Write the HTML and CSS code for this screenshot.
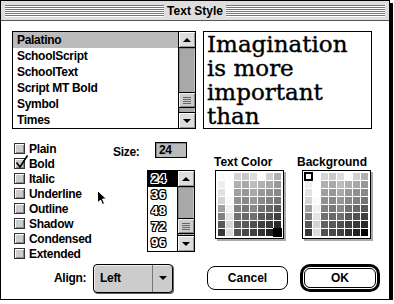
FILE: index.html
```html
<!DOCTYPE html>
<html lang="en">
<head>
    <meta charset="UTF-8">
    <title>Text Style</title>
    <link rel="stylesheet" href="styles.css">
</head>
<body>
    <div class="window">
        <div class="titlebar">
            <span class="stripes"></span>
            <span class="title">Text Style</span>
            <span class="stripes"></span>
        </div>

        <div class="content">
            <div class="top">
                <div class="listbox fonts">
                    <ul class="items">
                        <li class="sel">Palatino</li>
                        <li>SchoolScript</li>
                        <li>SchoolText</li>
                        <li>Script MT Bold</li>
                        <li>Symbol</li>
                        <li>Times</li>
                    </ul>
                    <div class="scrollbar">
                        <div class="arrow up"></div>
                        <div class="track"><div class="thumb"></div></div>
                        <div class="arrow down"></div>
                    </div>
                </div>
                <div class="preview">
                    <p class="quote">Imagination<br>is more<br>important<br>than</p>
                </div>
            </div>

            <div class="middle">
                <ul class="styles">
                    <li><span class="check"></span>Plain</li>
                    <li><span class="check checked">
                        <svg class="tick" width="16" height="16" viewBox="0 0 16 16"><path d="M2.5 8.5 L6 13 L13.5 1.5" fill="none" stroke="#000" stroke-width="1.6"/></svg>
                    </span>Bold</li>
                    <li><span class="check"></span>Italic</li>
                    <li><span class="check"></span>Underline</li>
                    <li><span class="check"></span>Outline</li>
                    <li><span class="check"></span>Shadow</li>
                    <li><span class="check"></span>Condensed</li>
                    <li><span class="check"></span>Extended</li>
                </ul>

                <div class="size">
                    <div class="size-row">
                        <label>Size:</label>
                        <div class="field">24</div>
                    </div>
                    <div class="listbox sizes">
                        <ul class="items">
                            <li class="sel">24</li>
                            <li>36</li>
                            <li>48</li>
                            <li>72</li>
                            <li>96</li>
                        </ul>
                        <div class="scrollbar">
                            <div class="arrow up"></div>
                            <div class="track"><div class="thumb"></div></div>
                            <div class="arrow down"></div>
                        </div>
                    </div>
                </div>

                <div class="palette text-color">
                    <div class="label">Text Color</div>
                    <div class="grid" id="text-grid"></div>
                </div>
                <div class="palette background">
                    <div class="label">Background</div>
                    <div class="grid" id="back-grid"></div>
                </div>
            </div>

            <div class="bottom">
                <label class="align-label">Align:</label>
                <div class="popup">
                    <span class="popup-value">Left</span>
                    <span class="popup-arrow"></span>
                </div>
                <button class="btn cancel">Cancel</button>
                <div class="default-ring"><button class="btn ok">OK</button></div>
            </div>
        </div>

        <svg class="cursor" width="12" height="17" viewBox="0 0 12 17">
            <path d="M1.5 1.5 L1.5 14 L4.5 11 L6.5 15.5 L8.5 14.5 L6.5 10 L10.5 10 Z" fill="#000" stroke="#fff" stroke-width="1"/>
        </svg>
    </div>

    <script>
        // greys of the colour palette as it shows in the screenshot
        const shades = [
            ['#fafafa', '#fff', '#d4d4d4', '#c8c8c8', '#dcdcdc', '#fcfcfc', '#d0d0d0', '#b0b0b0'],
            ['#eeeeee', '#fff', '#b0b0b0', '#a8a8a8', '#bcbcbc', '#b0b0b0', '#a8a8a8', '#989898'],
            ['#e2e2e2', '#fff', '#a0a0a0', '#989898', '#a8a8a8', '#989898', '#909090', '#888888'],
            ['#d4d4d4', '#fafafa', '#909090', '#888888', '#989898', '#888888', '#808080', '#747474'],
            ['#a0a0a0', '#f0f0f0', '#808080', '#787878', '#888888', '#707070', '#686868', '#585858'],
            ['#808080', '#e4e4e4', '#707070', '#686868', '#707070', '#585858', '#505050', '#404040'],
            ['#585858', '#d4d4d4', '#606060', '#585858', '#505050', '#404040', '#383838', '#282828'],
            ['#383838', '#dcdcdc', '#505050', '#484848', '#404040', '#303030', '#202020', '#000000']
        ];

        function fillGrid(id, selRow, selCol, selClass) {
            const grid = document.getElementById(id);
            shades.forEach((row, r) => {
                row.forEach((shade, c) => {
                    const cell = document.createElement('span');
                    cell.className = 'cell';
                    cell.style.background = shade;
                    if (r === selRow && c === selCol) {
                        cell.classList.add(selClass);
                    }
                    grid.appendChild(cell);
                });
            });
        }

        fillGrid('text-grid', 7, 7, 'sel-dark');
        fillGrid('back-grid', 0, 0, 'sel-light');
    </script>
</body>
</html>
```

FILE: styles.css
```css
* {
    box-sizing: border-box;
}
body {
    margin: 0;
    background: #fff;
    color: #000;
    font-family: "Liberation Sans", Arial, sans-serif;
    font-weight: bold;
    font-size: 12px;
    letter-spacing: -0.3px;
}
ul {
    list-style: none;
    margin: 0;
    padding: 0;
}
.window {
    position: relative;
    width: 390px;
    height: 300px;
    border: 1px solid #000;
    box-shadow: 3px 3px 0 #000;
    background: #fff;
}
.titlebar {
    display: flex;
    align-items: center;
    height: 20px;
    padding: 0 4px;
    background: #dedede;
    border-bottom: 1px solid #555;
}
.stripes {
    flex: 1;
    height: 12px;
    background: repeating-linear-gradient(#777 0 1px, #fff 1px 2px);
}
.title {
    padding: 0 3px;
    line-height: 12px;
    letter-spacing: 0;
}
.content {
    padding: 10px 0 0 11px;
}
.top {
    display: flex;
    gap: 7px;
    height: 98px;
}
.listbox {
    display: flex;
    border: 1px solid #000;
    background: #fff;
}
.items {
    flex: 1;
}
.fonts {
    width: 184px;
    height: 98px;
}
.fonts li {
    height: 16px;
    line-height: 16px;
    padding-left: 4px;
}
.fonts li.sel {
    background: #bbb;
}
.scrollbar {
    width: 17px;
    display: flex;
    flex-direction: column;
    border-left: 1px solid #000;
    background: #a8a8a8;
}
.arrow {
    height: 16px;
    display: flex;
    align-items: center;
    justify-content: center;
    background: #ddd;
    box-shadow: inset 1px 1px #fff, inset -1px -1px #999;
}
.arrow::after {
    content: "";
    border-left: 4px solid transparent;
    border-right: 4px solid transparent;
}
.arrow.up {
    border-bottom: 1px solid #000;
}
.arrow.up::after {
    border-bottom: 4px solid #000;
}
.arrow.down {
    border-top: 1px solid #000;
}
.arrow.down::after {
    border-top: 4px solid #000;
}
.track {
    flex: 1;
    box-shadow: inset 1px 1px #888, inset -1px 0 #c4c4c4;
}
.thumb {
    height: 16px;
    display: flex;
    align-items: center;
    justify-content: center;
    background: #ccc;
    border-top: 1px solid #000;
    border-bottom: 1px solid #000;
    box-shadow: inset 1px 1px #eee, inset -1px -1px #888;
}
.thumb::before {
    content: "";
    width: 8px;
    height: 7px;
    background: repeating-linear-gradient(#666 0 1px, transparent 1px 2px);
}
.fonts .thumb {
    margin-top: 44px;
}
.sizes .thumb {
    margin-top: 31px;
}
.preview {
    width: 169px;
    height: 98px;
    overflow: hidden;
    padding: 0 0 0 3px;
    border: 1px solid #000;
}
.quote {
    margin: 0;
    font-family: "DejaVu Serif", "Liberation Serif", serif;
    font-weight: normal;
    font-size: 23px;
    line-height: 24px;
    letter-spacing: 0;
    -webkit-text-stroke: 0.4px #000;
}
.middle {
    display: flex;
    align-items: flex-start;
    margin-top: 12px;
    height: 120px;
}
.styles {
    width: 99px;
    margin-left: 2px;
}
.styles li {
    display: flex;
    align-items: center;
    gap: 4px;
    height: 15px;
}
.check {
    position: relative;
    width: 11px;
    height: 11px;
    border: 1px solid #333;
    background: #ccc;
    box-shadow: inset 1px 1px #fff, inset -1px -1px #888;
}
.tick {
    position: absolute;
    left: -1px;
    top: -5px;
}
.size {
    width: 82px;
    display: flex;
    flex-direction: column;
}
.size-row {
    display: flex;
    align-items: center;
    height: 16px;
    margin-top: 1px;
}
.size-row label {
    width: 42px;
    padding-top: 4px;
}
.field {
    width: 32px;
    height: 16px;
    padding-left: 3px;
    line-height: 14px;
    background: #bbb;
    border: 1px solid #000;
    box-shadow: inset 1px 1px #888;
}
.sizes {
    align-self: flex-end;
    width: 48px;
    height: 82px;
    margin-top: 12px;
}
.sizes li {
    height: 16px;
    line-height: 16px;
    padding-left: 3px;
    font-size: 13px;
    letter-spacing: 0.5px;
    color: #fff;
    text-shadow: 1px 0 #000, -1px 0 #000, 0 1px #000, 0 -1px #000,
                 1px 1px #000, -1px -1px #000, 1px -1px #000, -1px 1px #000;
}
.sizes li.sel {
    background: #000;
    color: #000;
    text-shadow: 1px 0 #fff, -1px 0 #fff, 0 1px #fff, 0 -1px #fff,
                 1px 1px #fff, -1px -1px #fff, 1px -1px #fff, -1px 1px #fff;
}
.palette {
    margin-top: 15px;
}
.palette .label {
    line-height: 12px;
    letter-spacing: 0;
}
.text-color {
    width: 83px;
    margin-left: 19px;
}
.text-color .grid {
    margin-left: 1px;
}
.background .grid {
    margin-left: 5px;
}
.grid {
    width: 69px;
    display: grid;
    grid-template-columns: repeat(8, 7px);
    grid-auto-rows: 7px;
    gap: 1px;
    padding: 2px;
    margin-top: 2px;
    border: 1px solid #000;
    box-shadow: 2px 2px 0 #aaa;
    background: #fff;
}
.cell.sel-dark {
    box-shadow: 0 0 0 1px #000;
}
.cell.sel-light {
    box-shadow: 0 0 0 1px #000, inset 0 0 0 1px #000;
}
.bottom {
    display: flex;
    align-items: center;
    height: 30px;
    margin-top: 2px;
}
.align-label {
    width: 39px;
    margin-left: 42px;
}
.popup {
    display: flex;
    width: 80px;
    height: 29px;
    background: #ccc;
    border: 1px solid #000;
    border-radius: 4px;
    box-shadow: inset 1px 1px #eee, 1px 1px 0 #666;
}
.popup-value {
    width: 59px;
    padding-left: 6px;
    line-height: 27px;
    border-right: 1px solid #777;
}
.popup-arrow {
    flex: 1;
    display: flex;
    align-items: center;
    justify-content: center;
}
.popup-arrow::after {
    content: "";
    border-left: 4px solid transparent;
    border-right: 4px solid transparent;
    border-top: 4px solid #000;
}
.btn {
    font-family: inherit;
    font-weight: bold;
    font-size: 12px;
    letter-spacing: 0;
    color: #000;
    background: #fff;
    border: 1px solid #000;
    padding: 0;
}
.cancel {
    width: 81px;
    height: 24px;
    margin-left: 34px;
    border-radius: 8px;
}
.default-ring {
    width: 80px;
    height: 28px;
    margin-left: 12px;
    padding: 1px;
    border: 3px solid #000;
    border-radius: 10px;
}
.ok {
    width: 100%;
    height: 100%;
    border-radius: 6px;
}
.cursor {
    position: absolute;
    left: 95px;
    top: 188px;
}
```
